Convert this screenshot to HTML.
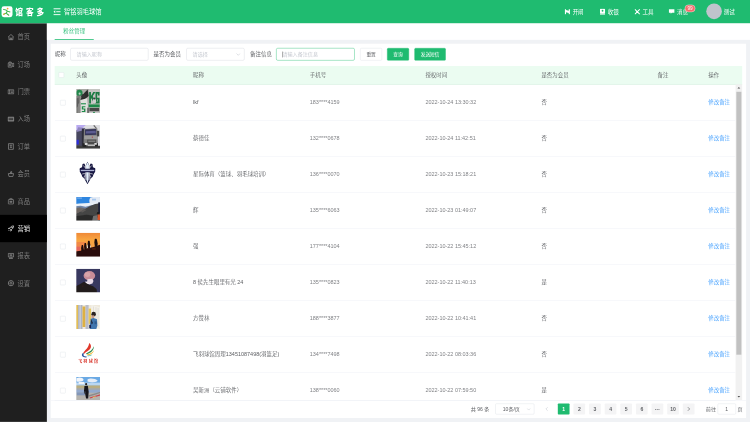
<!DOCTYPE html>
<html lang="zh-CN">
<head>
<meta charset="utf-8">
<title>粉丝管理</title>
<style>
*{box-sizing:border-box;margin:0;padding:0}
html,body{width:750px;height:422px;overflow:hidden;background:#f0f2f5}
body{font-family:"Liberation Sans","Noto Sans CJK SC",sans-serif;}
#app{position:absolute;left:0;top:0;width:1920px;height:1080px;transform:scale(0.390625);transform-origin:0 0;background:#f0f2f5;color:#606266;font-size:14px;overflow:hidden;font-weight:350}
.abs{position:absolute}
/* header */
#hdr{position:absolute;left:0;top:0;width:1920px;height:60px;background:#1fbb70;color:#fff;font-weight:400}
#logo{position:absolute;left:4px;top:16px;width:28px;height:28px;border-radius:6px;background:#fff}
#brand{position:absolute;left:39px;top:15px;font-size:19.5px;line-height:32px;font-weight:900;letter-spacing:7.8px;white-space:nowrap;font-family:"Liberation Sans","Noto Sans CJK SC",sans-serif}
#fold{position:absolute;left:136px;top:20px;width:20px;height:20px}
#venue{position:absolute;left:164px;top:18px;font-size:16px;line-height:24px;white-space:nowrap}
.nav{position:absolute;top:0;height:60px;line-height:60px;font-size:14px;white-space:nowrap}
.nav svg{position:absolute;top:22px;left:-21px;width:15px;height:16px}
#badge{position:absolute;left:1753px;top:12px;width:27px;height:19px;border-radius:10px;background:#f56c6c;border:1px solid #fff;font-size:12px;line-height:17px;text-align:center;color:#fff}
#uava{position:absolute;left:1808px;top:9px;width:40px;height:40px;border-radius:50%;background:#c0c4cc}
/* sidebar */
#side{position:absolute;left:0;top:60px;width:120px;height:1020px;background:#1f1f1f}
.mi{position:absolute;left:0;width:120px;height:70px;line-height:72px;font-size:16px;color:#858585;padding-left:45px}
.mi svg{position:absolute;left:19px;top:26px;width:18px;height:18px;color:#a0a0a0}
.mi.on svg{color:#fff}
.mi.on{background:#000;color:#fff}
/* tabs */
#tabs{position:absolute;left:120px;top:60px;width:1800px;height:42px;background:#fff}
#tab1{position:absolute;left:20px;top:0;width:100px;height:42px;line-height:38px;text-align:center;color:#1fbb70;font-size:14px;border-bottom:2px solid #1fbb70}
#card{position:absolute;left:130px;top:112px;width:1780px;height:958px;background:#fff}

.lb{position:absolute;top:11px;height:32px;line-height:32px;font-size:14px;color:#606266;font-weight:400;white-space:nowrap}
.inp{position:absolute;top:11px;height:32px;border:1px solid #d3d7de;border-radius:4px;background:#fff;line-height:30px;padding-left:15px;font-size:13px;color:#c0c4cc;white-space:nowrap}
.inp.foc{border-color:#1fbb70}
.inp .arr{position:absolute;right:9px;top:9px;width:12px;height:12px}
.caret{position:absolute;left:15px;top:8px;width:1px;height:15px;background:#333}
.btn{position:absolute;top:11px;height:32px;border:1px solid #dcdfe6;border-radius:3px;background:#fff;line-height:30px;text-align:center;font-size:12px;color:#606266;white-space:nowrap;font-weight:400}
.btn.g{background:#1fbb70;border-color:#1fbb70;color:#fff}
#th{position:absolute;left:10px;top:57px;width:1760px;height:47px;background:#ebfcf1;border-bottom:1px solid #bfe8cf}
.ck{position:absolute;width:14px;height:14px;border:1px solid #dcdfe6;border-radius:2px;background:#fff}
.h{position:absolute;top:0;line-height:46px;font-size:14px;color:#5c5e62;white-space:nowrap}
.c{position:absolute;top:0;line-height:89px;font-size:14px;color:#5c5e62;white-space:nowrap}
.c1{left:55px}.c2{left:354px}.c3{left:653px}.c4{left:949px}.c5{left:1246px}.c6{left:1543px}.c7{left:1673px}
.c.c7{color:#409eff}
.c.c3,.c.c4{color:#808286}
#tb{position:absolute;left:10px;top:104px;width:1743px;height:808.5px;overflow:hidden;border-bottom:1px solid #ebeef5}
.tr{position:absolute;left:0;width:1743px;height:92.16px;border-bottom:1px solid #ebeef5}
.av{position:absolute;left:54.5px;top:11px;width:61px;height:61px;overflow:hidden}
#sb{position:absolute;left:1753px;top:104px;width:17px;height:808px;background:#f1f1f1}
#sbt{position:absolute;left:2px;top:19px;width:13px;height:673px;background:#c1c1c1}
.sa{position:absolute;left:0;width:17px;height:17px}
#pg{position:absolute;left:0;top:921px;width:1780px;height:28px;font-size:13px;color:#606266;font-weight:400}
.pt{position:absolute;top:0;line-height:28px;white-space:nowrap}
.psel{position:absolute;top:0;height:28px;border:1px solid #dcdfe6;border-radius:3px;line-height:26px;padding-left:18px;white-space:nowrap}
.psel .arr{position:absolute;right:8px;top:8px;width:11px;height:11px}
.pb{position:absolute;top:0;width:30px;height:28px;border-radius:2px;background:#f4f4f5;line-height:28px;text-align:center;font-weight:bold;color:#606266}
.pb.act{background:#1fbb70;color:#fff}
.pb.dis{color:#c0c4cc;background:#fff}
.pin{position:absolute;top:0;width:47px;height:28px;border:1px solid #dcdfe6;border-radius:3px;line-height:26px;text-align:center}
</style>
</head>
<body>
<div id="app">
<svg width="0" height="0" style="position:absolute"><defs><filter id="bl" x="-5%" y="-5%" width="110%" height="110%"><feGaussianBlur stdDeviation="6"/></filter><linearGradient id="g5" x1="0" y1="0" x2="0" y2="1"><stop offset="0" stop-color="#ee8436"/><stop offset=".3" stop-color="#f8a540"/><stop offset=".55" stop-color="#f7a045"/><stop offset="1" stop-color="#ee7a40"/></linearGradient></defs></svg>
<div id="hdr">
  <div id="logo"><svg viewBox="0 0 27 27" width="27" height="27"><circle cx="15.500" cy="6" r="2.200" fill="#f5a623"/><path d="M5 8l6 1.500 4 3-3.500 5-6 3M15 12.500l6.500 2M11.500 17.500l7 5.500" stroke="#3cb54a" stroke-width="2.600" fill="none" stroke-linecap="round" stroke-linejoin="round"/><path d="M5 20.500l3-1.200" stroke="#f5a623" stroke-width="2.400" stroke-linecap="round"/></svg></div>
  <div id="brand">馆客多</div>
  <svg id="fold" viewBox="0 0 20 20"><path d="M1 2.500h18M8 10h11M1 17.500h18" stroke="#fff" stroke-width="2.400" fill="none"/><path d="M5.5 6v8L1 10z" fill="#fff"/></svg>
  <div id="venue">智铭羽毛球馆</div>
  <div class="nav" style="left:1466px"><svg viewBox="0 0 15 15"><path d="M1 1h3v13H1zM11 1h3v13h-3zM4 3l7 2v6l-7-2z" fill="#fff"/></svg>开闸</div>
  <div class="nav" style="left:1556px"><svg viewBox="0 0 15 15"><path d="M2 0h11a1 1 0 0 1 1 1v10a1 1 0 0 1-1 1H2a1 1 0 0 1-1-1V1a1 1 0 0 1 1-1zM1 13h13v2H1z" fill="#fff"/><circle cx="7.5" cy="5" r="2.3" fill="#1fbb70"/></svg>收银</div>
  <div class="nav" style="left:1645px"><svg viewBox="0 0 15 15"><path d="M2 2l11 11M13 2L2 13" stroke="#fff" stroke-width="2.6" fill="none" stroke-linecap="round"/></svg>工具</div>
  <div class="nav" style="left:1733px"><svg viewBox="0 0 15 15"><path d="M0 1h15v9H8l-3 3v-3H0z" fill="#fff"/></svg>消息</div>
  <div id="badge">99</div>
  <div id="uava"></div>
  <div class="nav" style="left:1853px">测试</div>
</div>
<div id="side">
  <div class="mi" style="top:0"><svg viewBox="0 0 16 16" fill="none" stroke="currentColor" stroke-width="1.400"><path d="M1.5 8L8 2l6.5 6M3.5 7v7h9V7M6.5 14v-4h3v4"/></svg>首页</div>
  <div class="mi" style="top:70px"><svg viewBox="0 0 16 16" fill="none" stroke="currentColor" stroke-width="1.400"><path d="M1.5 5h9v9h-9zM3.5 5V2.5h5V5M10.5 7l4-2v8l-4-2M4 8h3v3H4z"/></svg>订场</div>
  <div class="mi" style="top:140px"><svg viewBox="0 0 16 16" fill="none" stroke="currentColor" stroke-width="1.400"><path d="M1.5 3.5h13v9h-13zM5 3.5v9M7.5 6.5h5M7.5 9.5h5"/></svg>门票</div>
  <div class="mi" style="top:210px"><svg viewBox="0 0 16 16" fill="none" stroke="currentColor" stroke-width="1.400"><path d="M1.5 3.5h13v9h-13z" fill="currentColor" fill-opacity=".55"/><path d="M4 6v4M6.5 6v4M9 6v4M11.5 6v4" stroke="#1f1f1f"/></svg>入场</div>
  <div class="mi" style="top:280px"><svg viewBox="0 0 16 16" fill="none" stroke="currentColor" stroke-width="1.400"><path d="M2.5 1.5h11v13h-11zM5 5h6M8 5v5M5.5 10h5"/></svg>订单</div>
  <div class="mi" style="top:350px"><svg viewBox="0 0 16 16" fill="none" stroke="currentColor" stroke-width="1.400"><path d="M2 7.5h12l-1.5 6.5h-9zM6 7.5l2-5 2 1-1 4"/></svg>会员</div>
  <div class="mi" style="top:420px"><svg viewBox="0 0 16 16" fill="none" stroke="currentColor" stroke-width="1.400"><path d="M3 4.5h10a1 1 0 0 1 1 1v8a1 1 0 0 1-1 1H3a1 1 0 0 1-1-1v-8a1 1 0 0 1 1-1zM5.5 4.5v-2a1 1 0 0 1 1-1h3a1 1 0 0 1 1 1v2M5.5 8.5h5v2h-5z"/></svg>商品</div>
  <div class="mi on" style="top:490px"><svg viewBox="0 0 16 16" fill="none" stroke="currentColor" stroke-width="1.400"><path d="M14 2c-4 0-7 2-9 6l3 3c4-2 6-5 6-9zM5 8l-3 .5 2-2.500M8 11l-.5 3 2.500-2M2.500 13.500l2-2"/><circle cx="10.500" cy="5.500" r="1"/></svg>营销</div>
  <div class="mi" style="top:560px"><svg viewBox="0 0 16 16" fill="none" stroke="currentColor" stroke-width="1.400"><path d="M2 2.500h12v8H2zM5 5.500h6M5 7.500h6M5 14l1.500-3.500M11 14l-1.500-3.500M4 14h8"/></svg>报表</div>
  <div class="mi" style="top:630px"><svg viewBox="0 0 16 16" fill="none" stroke="currentColor" stroke-width="1.400"><circle cx="8" cy="8" r="6"/><circle cx="8" cy="8" r="2.200"/><path d="M8 2v2M8 12v2M2 8h2M12 8h2"/></svg>设置</div>
</div>
<div id="tabs"><div id="tab1">粉丝管理</div></div>
<div id="card">
  <span class="lb" style="left:10px">昵称</span>
  <div class="inp" style="left:50px;width:200px"><span class="ph">请输入昵称</span></div>
  <span class="lb" style="left:263px">是否为会员</span>
  <div class="inp" style="left:347px;width:149px"><span class="ph">请选择</span><svg class="arr" viewBox="0 0 12 12"><path d="M1.5 4l4.5 4.5L10.5 4" stroke="#c0c4cc" stroke-width="1.3" fill="none"/></svg></div>
  <span class="lb" style="left:510px">备注信息</span>
  <div class="inp foc" style="left:577px;width:201px"><span class="caret"></span><span class="ph">请输入备注信息</span></div>
  <div class="btn" style="left:792px;width:56px">重置</div>
  <div class="btn g" style="left:861px;width:56px">查询</div>
  <div class="btn g" style="left:931px;width:80px">发送短信</div>
  <div id="th">
    <span class="ck" style="left:10px;top:16px"></span>
    <span class="h c1">头像</span><span class="h c2">昵称</span><span class="h c3">手机号</span><span class="h c4">授权时间</span><span class="h c5">是否为会员</span><span class="h c6">备注</span><span class="h c7">操作</span>
  </div>
  <div id="tb">
  <div class="tr" style="top:0.60px">
    <span class="ck" style="left:14px;top:39px"></span>
    <div class="av" id="av1"><svg viewBox="125 63 297 297" width="61" height="61" preserveAspectRatio="none"><g filter="url(#bl)"><rect x="110" y="50" width="330" height="330" fill="#a9a9a5"/>
<rect x="282" y="50" width="160" height="330" fill="#c4c4c1"/>
<circle cx="165" cy="113" r="40" fill="#23874b"/><circle cx="168" cy="120" r="13" fill="#b9d3c0"/>
<path d="M125 150L180 140 178 360H125z" fill="#7b7b79"/>
<path d="M130 180l25 -10 5 90 -30 40z" fill="#5c5c5c"/>
<path d="M268 68L228 110 195 150 180 200 200 215 282 150z" fill="#2b2b2b"/>
<circle cx="215" cy="152" r="26" fill="#303030"/>
<path d="M178 200L262 178 272 290 262 360 176 360z" fill="#e2e2df"/>
<path d="M150 250l28 -30v140h-30z" fill="#8a8a88"/>
<path d="M185 238h62v16h-62z" fill="#3a9a60"/>
<path d="M195 278h45v12h-28v14h28v44h-45v-12h28v-18h-28z" fill="#1f8a4a"/>
<path d="M287 100h22v48l30-48h26l-33 50 36 92h-26l-25-66-8 12v54h-22z" fill="#1a7a42"/>
<path d="M366 100h50v42h-22v-20h-8v96h8v-28h-8v-20h30v72h-50z" fill="#1a7a42"/>
<ellipse cx="352" cy="215" rx="22" ry="30" fill="#d0d0d0"/>
<circle cx="352" cy="180" r="13" fill="#3d3d3d"/>
<rect x="280" y="254" width="138" height="36" fill="#1f8a4a"/>
<rect x="290" y="298" width="122" height="44" fill="#474747"/>
<rect x="262" y="295" width="26" height="65" fill="#6e6e6e"/>
<rect x="290" y="344" width="122" height="16" fill="#c9c9c9"/>
<rect x="335" y="348" width="24" height="12" fill="#2a8a50"/></g></svg></div>
    <span class="c c2">lkf</span><span class="c c3">183****4159</span><span class="c c4">2022-10-24 13:30:32</span><span class="c c5">否</span><span class="c c7">修改备注</span>
  </div>
  <div class="tr" style="top:92.76px">
    <span class="ck" style="left:14px;top:39px"></span>
    <div class="av" id="av2"><svg viewBox="125 63 297 297" width="61" height="61" preserveAspectRatio="none"><g filter="url(#bl)"><rect x="110" y="50" width="330" height="330" fill="#dedee2"/>
<path d="M110 50H260L125 165H110z" fill="#b9aaf0"/>
<path d="M350 63l35 40-12 8-35-40z" fill="#666"/>
<path d="M110 135L230 105V335H110z" fill="#47475f"/>
<path d="M150 90L240 100 232 125 128 150z" fill="#8f86bc"/>
<path d="M196 108h40v215h-40z" fill="#2d2d3a"/>
<path d="M128 248h30v58h-30z" fill="#2c2cdc"/>
<path d="M222 112L388 104 398 335 215 335z" fill="#7e7e7e"/>
<path d="M236 118L372 112 376 186 236 190z" fill="#35355a"/>
<path d="M246 140L368 135 370 165 246 170z" fill="#5c5c90"/>
<path d="M225 195h170v45h-170z" fill="#9c9c9c"/>
<path d="M262 245h110v58h-110z" fill="#4c4c4c"/>
<path d="M275 258h88v14h-88z" fill="#8a8a8a"/>
<circle cx="326" cy="214" r="7" fill="#b03030"/>
<rect x="384" y="135" width="28" height="70" fill="#444"/>
<path d="M110 322H440V380H110z" fill="#3c3c3c"/>
<path d="M205 290h45v48h-45zM360 290h36v42h-36z" fill="#262626"/>
<path d="M232 288h34v24h-34zM352 286h30v24h-30z" fill="#d8d8d8"/>
<path d="M270 308h90v18h-90z" fill="#bcbcbc"/></g></svg></div>
    <span class="c c2">蔡德佳</span><span class="c c3">132****0678</span><span class="c c4">2022-10-24 11:42:51</span><span class="c c5">否</span><span class="c c7">修改备注</span>
  </div>
  <div class="tr" style="top:184.92px">
    <span class="ck" style="left:14px;top:39px"></span>
    <div class="av" id="av3"><svg viewBox="55 40 337 337" width="61" height="61" preserveAspectRatio="none"><g filter="url(#bl)"><rect x="40" y="25" width="370" height="370" fill="#fff"/>
<path d="M215 52L240 100 250 95 262 78 285 85 292 128 325 142 318 200 300 232 288 262 262 290 215 368 168 290 142 262 130 232 112 200 105 142 138 128 145 85 168 78 180 95 190 100z" fill="#15153f"/>
<path d="M188 70v90M242 70v90M186 200l-6 110M244 200l6 110" stroke="#fff" stroke-width="11"/>
<path d="M160 105l18 30M270 105l-18 30M140 225l36 -8M290 225l-36 -8M160 268l24-22M270 268l-24-22" stroke="#fff" stroke-width="9"/>
<path d="M215 60L236 100 232 300 215 356 198 300 194 100z" fill="#e6f0fa"/>
<rect x="106" y="150" width="218" height="50" rx="10" fill="#1a1a48"/>
<rect x="120" y="166" width="190" height="18" fill="#aab0d0"/></g></svg></div>
    <span class="c c2">星际体育（篮球、羽毛球培训）</span><span class="c c3">136****0070</span><span class="c c4">2022-10-23 15:18:21</span><span class="c c5">否</span><span class="c c7">修改备注</span>
  </div>
  <div class="tr" style="top:277.08px">
    <span class="ck" style="left:14px;top:39px"></span>
    <div class="av" id="av4"><svg viewBox="123 62 297 297" width="61" height="61" preserveAspectRatio="none"><g filter="url(#bl)"><rect x="110" y="50" width="330" height="330" fill="#2f86e0"/>
<path d="M300 70C340 55 400 58 440 66V150H300C280 130 285 90 300 70z" fill="#e4ebf5"/>
<path d="M320 85h50v22h-50z" fill="#a9c8ee"/>
<path d="M135 70h60v14h-60z" fill="#7db2ee"/>
<path d="M110 150C180 138 260 140 330 135L440 125V200H110z" fill="#eaf0f7"/>
<path d="M110 178L180 172 240 184 300 168 440 140V380H110z" fill="#6f86aa"/>
<path d="M110 200L170 192 240 208 290 190 440 150V380H110z" fill="#6b6a6c"/>
<path d="M440 138L360 150 290 180 200 235 110 280V380H440z" fill="#444"/>
<path d="M110 215L160 205 195 232 140 262 110 270z" fill="#6d6560"/>
<path d="M215 215l40 6-50 36-30-8z" fill="#5d5a58"/>
<path d="M110 305L250 285 440 310V380H110z" fill="#2b2b2b"/>
<path d="M335 300L385 292 402 360 322 360z" fill="#707070"/>
<path d="M398 130h24v135h-24z" fill="#1d2038"/>
<circle cx="397" cy="266" r="15" fill="#1a1a1a"/>
<path d="M390 282h40v68h-40z" fill="#d9542b"/></g></svg></div>
    <span class="c c2">辉</span><span class="c c3">135****6063</span><span class="c c4">2022-10-23 01:49:07</span><span class="c c5">否</span><span class="c c7">修改备注</span>
  </div>
  <div class="tr" style="top:369.24px">
    <span class="ck" style="left:14px;top:39px"></span>
    <div class="av" id="av5"><svg viewBox="55 40 337 337" width="61" height="61" preserveAspectRatio="none"><g filter="url(#bl)"><rect x="40" y="25" width="370" height="370" fill="url(#g5)"/>
<path d="M40 170h150v140H40z" fill="#ee8248" opacity=".8"/>
<path d="M40 235h70v60H40z" fill="#e6685c"/>
<circle cx="232" cy="232" r="32" fill="#fff3e0"/>
<path d="M40 305L120 292 200 262 300 242 410 200V395H40z" fill="#2a0c0c"/>
<path d="M133 215c12-10 24 0 22 15l8 45-8 22h-26l-4-42z" fill="#1a0a0a"/>
<path d="M173 188c12-10 26 0 24 14l8 50-8 24h-26l-4-46z" fill="#1a0a0a"/>
<path d="M222 158c12-10 28 0 26 14l8 40-6 42h-28l-6-52z" fill="#1a0a0a"/>
<path d="M318 128c16-12 34 0 32 16l10 50-8 42h-32l-8-58z" fill="#1a0a0a"/>
<path d="M280 262h50v12h-50z" fill="#6b2a14"/></g></svg></div>
    <span class="c c2">强</span><span class="c c3">177****4104</span><span class="c c4">2022-10-22 15:45:12</span><span class="c c5">否</span><span class="c c7">修改备注</span>
  </div>
  <div class="tr" style="top:461.40px">
    <span class="ck" style="left:14px;top:39px"></span>
    <div class="av" id="av6"><svg viewBox="55 40 337 337" width="61" height="61" preserveAspectRatio="none"><g filter="url(#bl)"><rect x="40" y="25" width="370" height="370" fill="#37375f"/>
<ellipse cx="242" cy="138" rx="82" ry="66" fill="#c98d98"/>
<ellipse cx="215" cy="120" rx="40" ry="35" fill="#d9a3a8"/>
<path d="M215 190L285 180 300 215 285 250 240 262 205 245z" fill="#e9dbe8"/>
<path d="M190 215L240 250 220 262 185 250z" fill="#f2e9f0"/>
<path d="M40 290L100 262 165 225 230 262 300 290 345 330 350 395H40z" fill="#231d1d"/>
<circle cx="150" cy="285" r="7" fill="#5a1d1d"/><circle cx="62" cy="250" r="6" fill="#7a3a4a"/></g></svg></div>
    <span class="c c2">8 侯先生眼里有光 24</span><span class="c c3">135****0823</span><span class="c c4">2022-10-22 11:40:13</span><span class="c c5">是</span><span class="c c7">修改备注</span>
  </div>
  <div class="tr" style="top:553.56px">
    <span class="ck" style="left:14px;top:39px"></span>
    <div class="av" id="av7"><svg viewBox="55 40 337 337" width="61" height="61" preserveAspectRatio="none"><g filter="url(#bl)"><rect x="40" y="25" width="370" height="370" fill="#efe9dc"/>
<rect x="40" y="25" width="42" height="370" fill="#e2bd55"/>
<rect x="82" y="25" width="62" height="370" fill="#aeb3c2"/>
<rect x="100" y="25" width="22" height="370" fill="#c9ccd6"/>
<rect x="145" y="60" width="42" height="290" fill="#ddb042"/>
<rect x="187" y="25" width="44" height="370" fill="#b9bcc8"/>
<rect x="231" y="90" width="36" height="215" fill="#e6c75c"/>
<path d="M270 40L392 70V377H270z" fill="#f4f1ea"/>
<path d="M300 60v300M335 70v290M365 80v280" stroke="#d6d2c8" stroke-width="8"/>
<circle cx="302" cy="168" r="32" fill="#2a2320"/>
<path d="M270 185h40v45h-40z" fill="#c79a86"/>
<path d="M262 235L300 222 350 240 355 330 340 377H245L250 300z" fill="#3f74ad"/>
<path d="M262 235l30 60-20 20z" fill="#1d2436"/>
<path d="M315 270h30v40h-30z" fill="#2f5a8a"/>
<rect x="240" y="320" width="25" height="45" fill="#1a2250"/></g></svg></div>
    <span class="c c2">方赞林</span><span class="c c3">188****3877</span><span class="c c4">2022-10-22 10:41:41</span><span class="c c5">否</span><span class="c c7">修改备注</span>
  </div>
  <div class="tr" style="top:645.72px">
    <span class="ck" style="left:14px;top:39px"></span>
    <div class="av" id="av8"><svg viewBox="55 40 337 337" width="61" height="61" preserveAspectRatio="none"><g filter="url(#bl)"><rect x="40" y="25" width="370" height="370" fill="#fff"/>
<path d="M152 215C170 170 235 140 238 68 275 95 270 135 245 160 225 185 190 190 175 215z" fill="#e0382b"/>
<path d="M150 210C120 240 140 275 200 272L205 258C160 260 150 240 165 215z" fill="#2b55a0"/>
<path d="M195 215C250 195 290 160 305 115 310 165 265 215 200 228z" fill="#2e8b4f"/>
<path d="M205 232C250 225 290 200 305 170 302 210 255 240 210 242z" fill="#f3b62e"/>
<path d="M215 246C245 246 270 240 285 228 275 250 245 258 218 255z" fill="#3bb7a4"/></g><text x="223" y="354" text-anchor="middle" font-family="'Liberation Serif','Noto Serif CJK SC',serif" font-weight="900" font-size="58" fill="#d8342a" textLength="285" lengthAdjust="spacing">飞羽球馆</text></svg></div>
    <span class="c c2">飞羽球馆周理13451087498(羽篮足)</span><span class="c c3">134****7498</span><span class="c c4">2022-10-22 08:03:36</span><span class="c c5">否</span><span class="c c7">修改备注</span>
  </div>
  <div class="tr" style="top:737.88px">
    <span class="ck" style="left:14px;top:39px"></span>
    <div class="av" id="av9"><svg viewBox="55 40 337 337" width="61" height="61" preserveAspectRatio="none"><g filter="url(#bl)"><rect x="40" y="25" width="370" height="370" fill="#6aa9e4"/>
<path d="M60 60C90 40 150 45 160 80 150 110 80 115 60 100z" fill="#f2f5fa"/>
<path d="M215 75C250 50 330 60 360 95 330 125 240 120 215 105z" fill="#e6edf7"/>
<path d="M40 120h370v45H40z" fill="#b9d6f2"/>
<path d="M90 110h80v30h-80z" fill="#eef3f9"/>
<rect x="40" y="160" width="370" height="40" fill="#b9ad80"/>
<rect x="40" y="195" width="370" height="30" fill="#a9a9a4"/>
<rect x="40" y="220" width="370" height="45" fill="#93a9cc"/>
<rect x="40" y="262" width="370" height="140" fill="#b5b3ae"/>
<path d="M60 260h120v40H60z" fill="#8296b8"/>
<path d="M230 300L410 245V262L235 320z" fill="#8a8a8a"/>
<path d="M245 330L410 280V300L250 345z" fill="#c9434f"/>
<path d="M290 325l40-12v12l-40 12z" fill="#e6d86a"/>
<circle cx="196" cy="142" r="15" fill="#2a2422"/>
<path d="M172 168L220 165 232 250 225 345H195L180 270 165 245z" fill="#17171a"/>
<path d="M165 245h25v30h-25z" fill="#3a3f4a"/></g></svg></div>
    <span class="c c2">吴新洲（云铺软件）</span><span class="c c3">138****0060</span><span class="c c4">2022-10-22 07:59:50</span><span class="c c5">是</span><span class="c c7">修改备注</span>
  </div>
  </div>
  <div id="sb"><div id="sbt"></div>
    <svg class="sa" style="top:0" viewBox="0 0 17 17"><path d="M5 10.5l3.5-4 3.5 4z" fill="#505050"/></svg>
    <svg class="sa" style="bottom:0" viewBox="0 0 17 17"><path d="M5 6.5l3.5 4 3.5-4z" fill="#505050"/></svg>
  </div>
  <div style="position:absolute;left:0;top:912px;width:1780px;height:1px;background:#ebeef5"></div>
  <div id="pg">
    <span class="pt" style="left:1075px">共 96 条</span>
    <div class="psel" style="left:1138px;width:100px">10条/页<svg class="arr" viewBox="0 0 12 12"><path d="M1.5 4l4.5 4.5L10.5 4" stroke="#c0c4cc" stroke-width="1.3" fill="none"/></svg></div>
    <div class="pb dis" style="left:1258px"><svg viewBox="0 0 12 12" width="12" height="12" style="position:absolute;left:6px;top:8px"><path d="M8 1.500L3.500 6 8 10.500" stroke="#c0c4cc" stroke-width="1.300" fill="none"/></svg></div>
    <div class="pb act" style="left:1298px">1</div>
    <div class="pb" style="left:1338px">2</div>
    <div class="pb" style="left:1378px">3</div>
    <div class="pb" style="left:1418px">4</div>
    <div class="pb" style="left:1458px">5</div>
    <div class="pb" style="left:1498px">6</div>
    <div class="pb" style="left:1538px">···</div>
    <div class="pb" style="left:1578px">10</div>
    <div class="pb" style="left:1618px"><svg viewBox="0 0 12 12" width="12" height="12" style="position:absolute;left:9px;top:8px"><path d="M4 1.500L8.500 6 4 10.500" stroke="#303133" stroke-width="1.300" fill="none"/></svg></div>
    <span class="pt" style="left:1677px">前往</span>
    <div class="pin" style="left:1707px">1</div>
    <span class="pt" style="left:1758px">页</span>
  </div>
</div>
</div>
</body>
</html>
